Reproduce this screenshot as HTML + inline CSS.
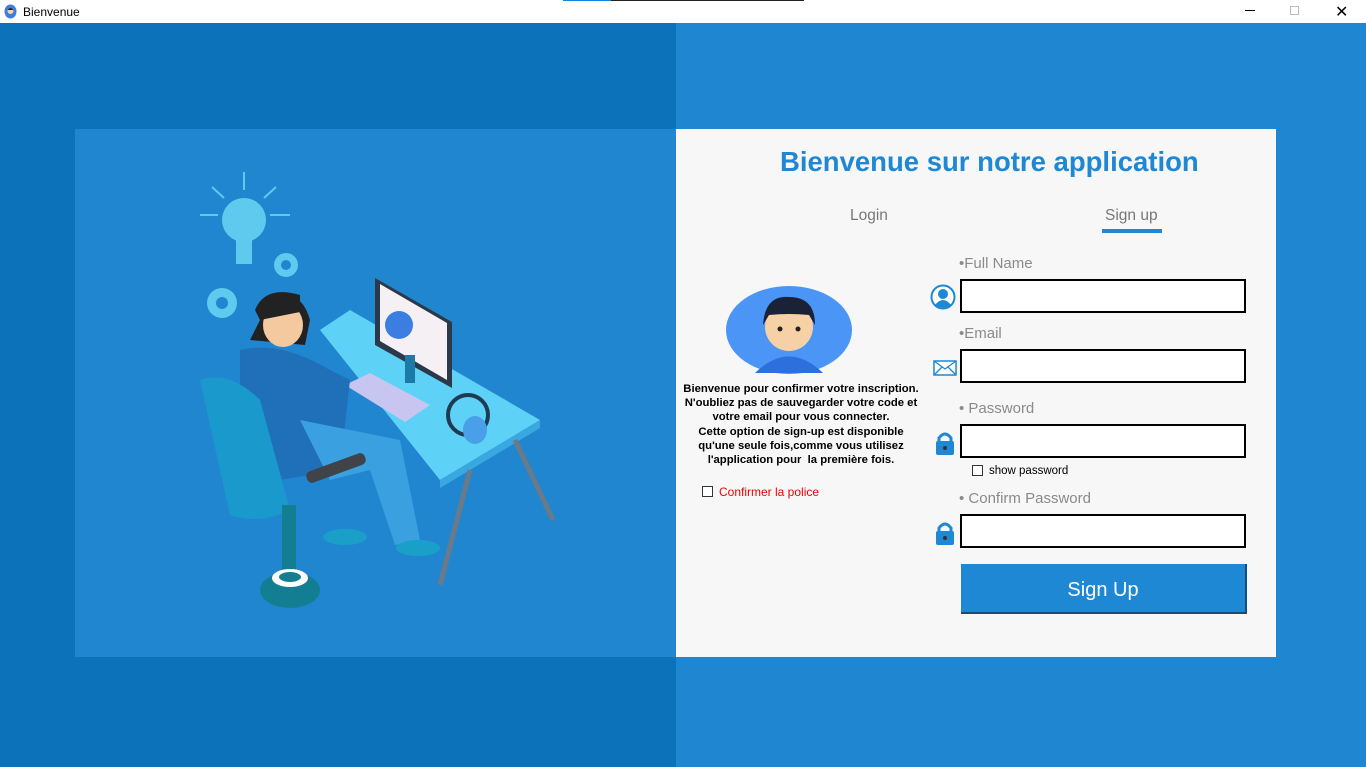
<!DOCTYPE html>
<html><head><meta charset="utf-8"><style>
*{margin:0;padding:0;box-sizing:border-box}
body{width:1366px;height:767px;overflow:hidden;font-family:"Liberation Sans",sans-serif;position:relative;background:#1f86d1}
.tb{position:absolute;left:0;top:0;width:1366px;height:23px;background:#fff;font-size:12px}
.lo{position:absolute;left:0;top:23px;width:676px;height:744px;background:#0c72b9}
.ro{position:absolute;left:676px;top:23px;width:690px;height:744px;background:#1f86d1}
.lc{position:absolute;left:75px;top:129px;width:601px;height:528px;background:#2186d0}
.rc{position:absolute;left:676px;top:129px;width:600px;height:528px;background:#f7f7f7}
.abs{position:absolute}
.lbl{position:absolute;color:#8a8a8a;font-size:15px;font-family:"Liberation Sans",sans-serif}
.inp{position:absolute;left:960px;width:286px;height:34px;border:2px solid #000;background:#fff}
.txt{position:absolute;left:676px;top:382px;width:250px;text-align:center;font-size:11.3px;font-weight:bold;line-height:14.2px;color:#000;white-space:nowrap}
</style></head><body>
<div class="tb">
<svg class="abs" style="left:4px;top:4px" width="13" height="15" viewBox="0 0 13 15"><ellipse cx="6.5" cy="7.5" rx="6" ry="7" fill="#3b7de0"/><circle cx="6.5" cy="7" r="3" fill="#f5d3a8"/><path d="M3.5 6 Q6.5 2 9.5 6Z" fill="#222"/></svg>
<span class="abs" style="left:23px;top:5px">Bienvenue</span>
<div class="abs" style="left:563px;top:0;width:48px;height:1px;background:#0a84e0"></div>
<div class="abs" style="left:611px;top:0;width:193px;height:1px;background:#222"></div>
<div class="abs" style="left:1245px;top:10px;width:10px;height:1px;background:#000"></div>
<div class="abs" style="left:1290px;top:6px;width:9px;height:9px;border:1px solid #bbb"></div>
<span class="abs" style="left:1335px;top:2px;font-size:16px">✕</span>
</div>
<div class="lo"></div><div class="ro"></div>
<div class="lc">
<svg width="601" height="528" viewBox="75 129 601 528" style="position:absolute;left:0;top:0">
 <g stroke="#5fc9ee" stroke-width="2"><line x1="244" y1="172" x2="244" y2="190"/><line x1="212" y1="187" x2="224" y2="198"/><line x1="276" y1="187" x2="264" y2="198"/><line x1="200" y1="215" x2="218" y2="215"/><line x1="270" y1="215" x2="290" y2="215"/></g>
 <circle cx="244" cy="220" r="22" fill="#5fc9ee"/><rect x="236" y="238" width="16" height="26" fill="#5fc9ee"/>
 <circle cx="286" cy="265" r="12" fill="#5fc9ee"/><circle cx="286" cy="265" r="5" fill="#2186d0"/>
 <circle cx="222" cy="303" r="15" fill="#5fc9ee"/><circle cx="222" cy="303" r="6" fill="#2186d0"/>
 <polygon points="320,330 350,310 540,420 440,480" fill="#5dd2f6"/>
 <polygon points="440,480 540,420 540,428 440,488" fill="#3aa8e0"/>
 <line x1="470" y1="470" x2="440" y2="585" stroke="#6a7a88" stroke-width="5"/>
 <line x1="515" y1="440" x2="553" y2="520" stroke="#6a7a88" stroke-width="5"/>
 <polygon points="375,278 452,322 452,388 375,345" fill="#2a3a4a"/>
 <polygon points="380,284 447,323 447,380 380,341" fill="#f4f0f4"/>
 <circle cx="399" cy="325" r="14" fill="#3b7de0"/>
 <rect x="405" y="355" width="10" height="28" fill="#1c7aa8"/>
 <polygon points="345,385 370,373 430,405 405,422" fill="#c8c6f0"/>
 <circle cx="468" cy="415" r="20" fill="none" stroke="#1e3a55" stroke-width="4"/>
 <ellipse cx="475" cy="430" rx="12" ry="14" fill="#4aa0e8"/>
 <path d="M270 300 Q300 285 310 320 L305 345 L250 340Z" fill="#222"/>
 <ellipse cx="283" cy="325" rx="20" ry="22" fill="#f4c9a0"/>
 <path d="M255 310 Q265 285 300 295 L300 312 L260 320Z" fill="#222"/>
 <path d="M240 350 Q280 340 330 370 L350 380 L340 470 L280 480 L240 420Z" fill="#1f70b8"/>
 <path d="M300 420 L400 440 L420 540 L395 545 L370 470 L330 480Z" fill="#3aa0e0"/>
 <path d="M200 380 Q230 370 260 400 L290 510 Q260 525 230 515Z" fill="#1a9acc"/>
 <rect x="305" y="462" width="62" height="12" rx="5" fill="#404448" transform="rotate(-20 336 468)"/>
 <rect x="282" y="505" width="14" height="70" fill="#137e92"/>
 <ellipse cx="290" cy="590" rx="30" ry="18" fill="#137e92"/>
 <ellipse cx="290" cy="578" rx="18" ry="9" fill="#fff"/><ellipse cx="290" cy="577" rx="11" ry="5" fill="#137e92"/>
 <ellipse cx="345" cy="537" rx="22" ry="8" fill="#1aa0c8"/><ellipse cx="418" cy="548" rx="22" ry="8" fill="#1aa0c8"/>
</svg>
</div>
<div class="rc"></div>
<div class="abs" style="left:780px;top:146px;color:#1e88d4;font-size:27.5px;font-weight:bold;white-space:nowrap">Bienvenue sur notre application</div>
<div class="abs" style="left:850px;top:207px;color:#777;font-size:15.5px">Login</div>
<div class="abs" style="left:1105px;top:207px;color:#777;font-size:15.5px">Sign up</div>
<div class="abs" style="left:1102px;top:229px;width:60px;height:4px;background:#1e88d4"></div>
<svg class="abs" style="left:725px;top:285px" width="128" height="90" viewBox="0 0 128 90"><ellipse cx="64" cy="45" rx="63" ry="44" fill="#4a95f5"/><path d="M30 88 Q64 55 98 88Z" fill="#2d6fdc"/><circle cx="64" cy="42" r="24" fill="#f6d1a5"/><path d="M38 40 Q40 10 64 12 Q90 12 90 40 L84 30 Q64 28 44 30Z" fill="#1a2238"/><circle cx="55" cy="44" r="2.5" fill="#222"/><circle cx="73" cy="44" r="2.5" fill="#222"/></svg>
<div class="txt">Bienvenue pour confirmer votre inscription.<br>N'oubliez pas de sauvegarder votre code et<br>votre email pour vous connecter.<br>Cette option de sign-up est disponible<br>qu'une seule fois,comme vous utilisez<br>l'application pour &nbsp;la première fois.</div>
<div class="abs" style="left:702px;top:486px;width:11px;height:11px;border:1px solid #333;background:#fff"></div>
<div class="abs" style="left:719px;top:485px;font-size:12px;color:#e00">Confirmer la police</div>
<div class="lbl" style="left:959px;top:255px">•Full Name</div>
<div class="inp" style="top:279px"></div>
<svg class="abs" style="left:930px;top:284px" width="26" height="26" viewBox="0 0 26 26"><circle cx="13" cy="13" r="11.5" fill="#fff" stroke="#1e88d4" stroke-width="2"/><circle cx="13" cy="10" r="5" fill="#1e88d4"/><path d="M5 21 Q13 11 21 21 Q13 26 5 21Z" fill="#1e88d4"/></svg>
<div class="lbl" style="left:959px;top:325px">•Email</div>
<div class="inp" style="top:349px"></div>
<svg class="abs" style="left:933px;top:360px" width="24" height="16" viewBox="0 0 24 16"><rect x="1" y="1" width="22" height="14" fill="#fff" stroke="#1e88d4" stroke-width="1.5"/><path d="M1 1 L12 9 L23 1 M1 15 L9 7 M23 15 L15 7" stroke="#1e88d4" stroke-width="1.3" fill="none"/></svg>
<div class="lbl" style="left:959px;top:400px">• Password</div>
<div class="inp" style="top:424px"></div>
<svg class="abs" style="left:934px;top:431px" width="22" height="24" viewBox="0 0 22 24"><path d="M5 11 V7 Q11 -1 17 7 V11" fill="none" stroke="#1e88d4" stroke-width="3"/><rect x="2" y="10" width="18" height="14" rx="2" fill="#1e88d4"/><circle cx="11" cy="17" r="2" fill="#333"/></svg>
<div class="abs" style="left:972px;top:465px;width:11px;height:11px;border:1px solid #333;background:#fff"></div>
<div class="abs" style="left:989px;top:465px;color:#000;font-size:11.5px">show password</div>
<div class="lbl" style="left:959px;top:490px">• Confirm Password</div>
<div class="inp" style="top:514px"></div>
<svg class="abs" style="left:934px;top:521px" width="22" height="24" viewBox="0 0 22 24"><path d="M5 11 V7 Q11 -1 17 7 V11" fill="none" stroke="#1e88d4" stroke-width="3"/><rect x="2" y="10" width="18" height="14" rx="2" fill="#1e88d4"/><circle cx="11" cy="17" r="2" fill="#333"/></svg>
<div class="abs" style="left:961px;top:564px;width:286px;height:50px;background:#1e88d4;border-right:2px solid #124e80;border-bottom:2px solid #124e80;color:#fff;font-size:20px;text-align:center;line-height:52px">Sign Up</div>
</body></html>
